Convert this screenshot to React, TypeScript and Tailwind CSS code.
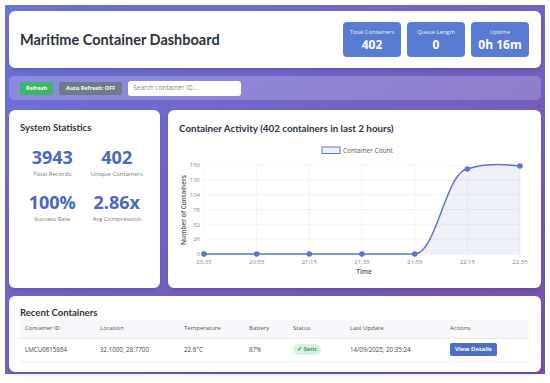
import React from "react";

const font = { fontFamily: '"Open Sans", "Noto Sans", sans-serif' };
const heading = { fontFamily: 'Lato, "Open Sans", sans-serif' };

interface Stat {
    value: string;
    label: string;
}

const headerStats: Stat[] = [
    { label: "Total Containers", value: "402" },
    { label: "Queue Length", value: "0" },
    { label: "Uptime", value: "0h 16m" },
];

const systemStats: Stat[] = [
    { value: "3943", label: "Total Records" },
    { value: "402", label: "Unique Containers" },
    { value: "100%", label: "Success Rate" },
    { value: "2.86x", label: "Avg Compression" },
];

const xs = [204, 256.7, 309.3, 362, 414.7, 467.3, 520];
const xLabels = ["20:35", "20:55", "21:15", "21:35", "21:55", "22:15", "22:35"];
const yTicks = [0, 26, 52, 78, 104, 130, 156];
const yOf = (v: number) => 254 - (v / 156) * 89;

const ActivityChart: React.FC = () => {
    const line =
        "M204,254 L414.7,254 C436,254 446,172 467.3,169 C486,163 504,164 520,166";
    const area = line + " L520,254 Z";
    return (
        <svg className="block" width={357} height={136} viewBox="175 142 357 136">
            {/* legend */}
            <rect x={322} y={147} width={18} height={6.5} fill="#eef1fb" stroke="#5b76c9" strokeWidth={1} />
            <text x={343} y={152.5} fontSize={6.5} fill="#555">Container Count</text>

            {/* grid */}
            {yTicks.map((t) => (
                <g key={t}>
                    <line x1={204} x2={520} y1={yOf(t)} y2={yOf(t)} stroke="#ececec" strokeWidth={0.6} />
                    <text x={200} y={yOf(t) + 2.2} fontSize={6} fill="#888" textAnchor="end">{t}</text>
                </g>
            ))}
            {xs.map((x, i) => (
                <g key={x}>
                    <line x1={x} x2={x} y1={165} y2={257} stroke="#ececec" strokeWidth={0.6} />
                    <text x={x} y={264} fontSize={6} fill="#888" textAnchor="middle">{xLabels[i]}</text>
                </g>
            ))}

            <text x={364} y={273.5} fontSize={6.5} fill="#555" fontWeight={600} textAnchor="middle">Time</text>
            <text
                x={0}
                y={0}
                fontSize={6.5}
                fill="#555"
                fontWeight={600}
                textAnchor="middle"
                transform="translate(185.5 210) rotate(-90)"
            >
                Number of Containers
            </text>

            <path d={area} fill="#5b76c9" fillOpacity={0.1} />
            <path d={line} fill="none" stroke="#5b76c9" strokeWidth={1.5} />
            {[254, 254, 254, 254, 254, 169, 166].map((y, i) => (
                <circle key={i} cx={xs[i]} cy={y} r={2.8} fill="#5b76c9" />
            ))}
        </svg>
    );
};

export default function App() {
    return (
        <div className="w-[550px] h-[383px] bg-white pt-[5px] px-[5px] text-[#2c3e50]" style={font}>
            <div className="h-[369px] bg-gradient-to-br from-[#6a73dc] to-[#7a4fab] pt-[6px] px-[4px] flex flex-col">
                {/* header */}
                <div className="h-[57px] bg-white rounded-[6px] flex items-center justify-between pl-[11px] pr-[12px] shadow-md">
                    <h1 className="text-[14.5px] font-bold text-[#2a3340]" style={heading}>Maritime Container Dashboard</h1>
                    <div className="flex gap-[6px]">
                        {headerStats.map((s) => (
                            <div
                                key={s.label}
                                className="w-[58px] h-[35px] bg-[#5a7bd2] rounded-[4px] flex flex-col items-center justify-center text-white"
                            >
                                <span className="text-[5.8px] leading-[9px] opacity-90">{s.label}</span>
                                <span className="text-[12px] leading-[15px] font-bold">{s.value}</span>
                            </div>
                        ))}
                    </div>
                </div>

                {/* toolbar */}
                <div className="mt-[8px] h-[24px] bg-white/20 rounded-[5px] flex items-center pl-[11px] gap-[6px]">
                    <button className="h-[13px] px-[6px] bg-[#3fb46c] text-white text-[5.5px] font-bold rounded-[2px]">Refresh</button>
                    <button className="h-[13px] px-[7px] bg-[#6f7a8a] text-white text-[5.5px] font-bold rounded-[2px]">Auto Refresh: OFF</button>
                    <div className="w-[113px] h-[15px] bg-white rounded-[3px] flex items-center px-[5px] text-[6.5px] text-[#888]">
                        Search container ID...
                    </div>
                </div>

                {/* main cards */}
                <div className="mt-[10px] flex gap-[8px] h-[178px]">
                    <div className="w-[151px] bg-white rounded-[6px] pt-[12px] px-[11px] shadow-md">
                        <h2 className="text-[9.5px] leading-[12px] font-bold text-[#2a3340]" style={heading}>System Statistics</h2>
                        <div className="grid grid-cols-2 mt-[12px] gap-y-[12px]">
                            {systemStats.map((s) => (
                                <div key={s.label} className="flex flex-col items-center">
                                    <span className="text-[18px] leading-[22px] font-bold text-[#4a68c2]">{s.value}</span>
                                    <span className="text-[6px] leading-[9px] text-[#777] mt-[2px]">{s.label}</span>
                                </div>
                            ))}
                        </div>
                    </div>
                    <div className="flex-1 bg-white rounded-[6px] pt-[12px] px-[7px] shadow-md">
                        <h2 className="text-[9.8px] leading-[12px] font-bold text-[#2a3340] pl-[4px]" style={heading}>
                            Container Activity (402 containers in last 2 hours)
                        </h2>
                        <div className="mt-[8px]">
                            <ActivityChart />
                        </div>
                    </div>
                </div>

                {/* recent containers */}
                <div className="mt-[8px] h-[76px] bg-white rounded-[6px] px-[11px] pt-[11px] shadow-md">
                    <h2 className="text-[9.5px] leading-[12px] font-bold text-[#2a3340]" style={heading}>Recent Containers</h2>
                    <table className="mt-[1px] w-[508px] table-fixed text-left border-collapse">
                        <colgroup>
                            <col className="w-[75px]" />
                            <col className="w-[84px]" />
                            <col className="w-[65px]" />
                            <col className="w-[44px]" />
                            <col className="w-[57px]" />
                            <col className="w-[100px]" />
                            <col />
                        </colgroup>
                        <thead>
                            <tr className="bg-[#f6f8fb] h-[18px] text-[6px] text-[#555] border-b border-[#e6e9ee]">
                                <th className="font-normal pl-[5px]">Container ID</th>
                                <th className="font-normal pl-[5px]">Location</th>
                                <th className="font-normal pl-[5px]">Temperature</th>
                                <th className="font-normal pl-[5px]">Battery</th>
                                <th className="font-normal pl-[5px]">Status</th>
                                <th className="font-normal pl-[5px]">Last Update</th>
                                <th className="font-normal pl-[5px]">Actions</th>
                            </tr>
                        </thead>
                        <tbody>
                            <tr className="h-[23px] text-[6.2px] text-[#444] border-b border-[#eceef2]">
                                <td className="pl-[5px]">LMCU0615864</td>
                                <td className="pl-[5px]">32.1000, 28.7700</td>
                                <td className="pl-[5px]">22.6°C</td>
                                <td className="pl-[5px]">87%</td>
                                <td className="pl-[5px]">
                                    <span className="inline-block bg-[#d4f3df] text-[#23864a] rounded-full px-[4px] py-[1px] text-[6px] font-semibold">
                                        ✓ Sent
                                    </span>
                                </td>
                                <td className="pl-[5px]">14/09/2025, 20:35:24</td>
                                <td className="pl-[5px]">
                                    <span className="inline-block bg-[#4e6ec8] text-white rounded-[2px] px-[5px] py-[2px] text-[6px] font-bold">
                                        View Details
                                    </span>
                                </td>
                            </tr>
                        </tbody>
                    </table>
                </div>
            </div>
        </div>
    );
}
